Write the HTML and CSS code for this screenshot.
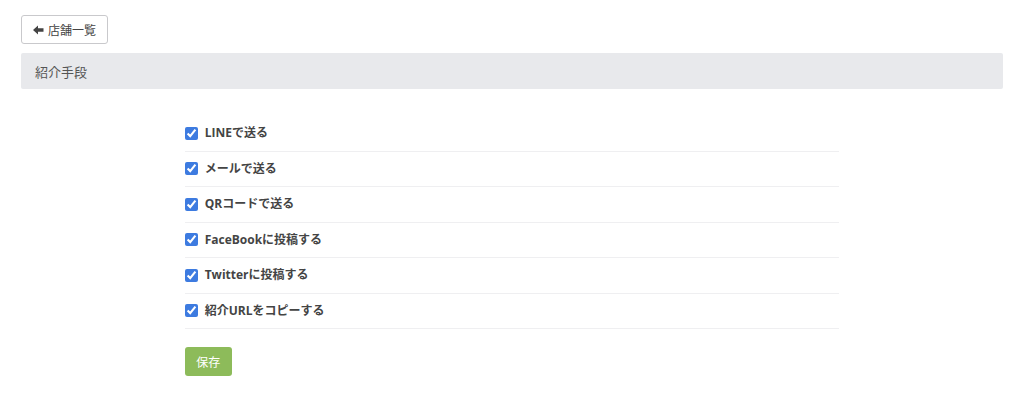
FILE: index.html
```html
<!DOCTYPE html>
<html lang="ja">
<head>
<meta charset="utf-8">
<title>紹介手段</title>
<link rel="stylesheet" href="styles.css">
</head>
<body>
<div class="page">
  <div class="toolbar">
    <button class="back-btn" type="button">
      <svg class="arrow" width="11" height="10" viewBox="0 0 11 10" aria-hidden="true">
        <path d="M0 5 L5 0.5 L5 3.3 L10.5 3.3 L10.5 6.7 L5 6.7 L5 9.5 Z" fill="#444"/>
      </svg>
      <span>店舗一覧</span>
    </button>
  </div>
  <div class="section-head">紹介手段</div>
  <div class="content">
    <form class="form">
      <label class="row"><input type="checkbox" checked><span>LINEで送る</span></label>
      <label class="row"><input type="checkbox" checked><span>メールで送る</span></label>
      <label class="row"><input type="checkbox" checked><span>QRコードで送る</span></label>
      <label class="row"><input type="checkbox" checked><span>FaceBookに投稿する</span></label>
      <label class="row"><input type="checkbox" checked><span>Twitterに投稿する</span></label>
      <label class="row"><input type="checkbox" checked><span>紹介URLをコピーする</span></label>
      <button class="save-btn" type="button">保存</button>
    </form>
  </div>
</div>
</body>
</html>
```

FILE: styles.css
```css
* { box-sizing: border-box; }
html, body { margin: 0; padding: 0; background: #fff; }
body {
  font-family: "Open Sans", "Noto Sans CJK JP", sans-serif;
  color: #555;
  font-size: 12px;
}
.page {
  padding: 15px 21px 0 21px;
}
.toolbar {
  display: flex;
  height: 29px;
}
.back-btn {
  display: flex;
  align-items: center;
  gap: 4px;
  height: 29px;
  width: 87px;
  padding: 0 0 0 11px;
  border: 1px solid #c9c9cc;
  border-radius: 3px;
  background: #fff;
  font-family: inherit;
  font-size: 12px;
  color: #444;
  cursor: pointer;
}
.back-btn .arrow { display: block; flex: none; }
.section-head {
  margin-top: 9px;
  height: 36px;
  background: #e8e9ec;
  border-radius: 2px;
  padding: 0 14px;
  display: flex;
  align-items: center;
  font-size: 13px;
  color: #555;
}
.content {
  display: grid;
  grid-template-columns: 1fr 4fr 1fr;
  padding-top: 27px;
}
.form {
  grid-column: 2;
  display: flex;
  flex-direction: column;
  align-items: flex-start;
}
.row {
  width: 100%;
  display: flex;
  align-items: center;
  gap: 7px;
  padding: 8.25px 0;
  line-height: 18px;
  border-bottom: 1px solid #efeff1;
  font-weight: 700;
  color: #444;
  font-size: 12px;
}
.row input {
  margin: 0;
  width: 13px;
  height: 13px;
  accent-color: #3d7be0;
  flex: none;
}
.save-btn {
  margin-top: 18px;
  width: 47px;
  height: 29px;
  border: none;
  border-radius: 3px;
  background: #8dbb5a;
  color: #fff;
  font-family: inherit;
  font-size: 12px;
  padding: 0;
}
```
